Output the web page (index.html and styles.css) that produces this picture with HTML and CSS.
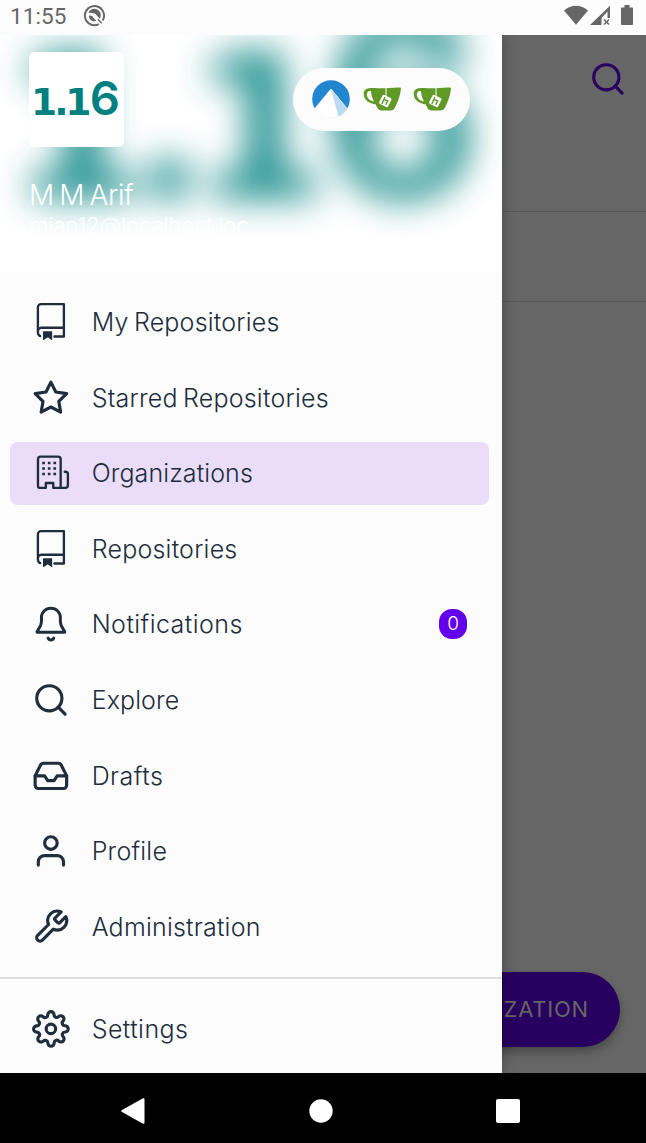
FILE: index.html
```html
<!DOCTYPE html>
<html lang="en">
<head>
<meta charset="utf-8">
<title>Organizations</title>
<link rel="stylesheet" href="styles.css">
</head>
<body>
<svg class="defs" width="0" height="0">
  <symbol id="repo" viewBox="0 0 24 24"><path fill="currentColor" stroke="none" fill-rule="evenodd" d="M3 2.75A2.75 2.75 0 015.75 0h14.5a.75.75 0 01.75.75v20.5a.75.75 0 01-.75.75h-6a.75.75 0 010-1.5h5.25v-4H6A1.5 1.5 0 004.5 18v.75c0 .716.43 1.334 1.05 1.605a.75.75 0 01-.6 1.374A3.25 3.25 0 013 18.75v-16zM19.5 1.5V15H6c-.546 0-1.059.146-1.5.401V2.75c0-.69.56-1.25 1.25-1.25H19.5z"/><path fill="currentColor" stroke="none" d="M7 18.250a.25.25 0 01.25-.25h5.300a.25.25 0 01.25.25v5.010a.25.25 0 01-.397.201l-2.206-1.604a.25.25 0 00-.294 0L7.397 23.460a.25.25 0 01-.397-.2v-5.010z"/></symbol>
  <symbol id="search" viewBox="0 0 24 24"><circle cx="11" cy="11" r="8"/><path d="M21 21l-4.350-4.350"/></symbol>
  <symbol id="cup" viewBox="0 0 38 24">
    <path fill="#609926" d="M6 1.200C9 .6 15 1.300 22 1.200c6-.1 12-.6 15.200-.6.700 0 .8.8.6 2.200C37.200 9 34 17 31.500 21.300c-1 1.600-2 2.200-4 2.200H18.500c-2 0-3.200-1-4-2.500l-2-3.800C7 16.800 1 13.500.7 7.500.5 3.800 2.500 1.500 6 1.200z"/>
    <path fill="#fcfcfc" d="M7.300 4C4.500 4 3.600 6 3.900 8.300c.5 3.500 3.500 5.500 7 6.300C9.300 11.300 8.300 7.800 7.900 4z"/>
    <path d="M23 1v8" stroke="#fcfcfc" stroke-width="1"/>
    <rect x="17.300" y="9" width="10" height="10" rx="1.500" fill="#fcfcfc" transform="rotate(26 22.300 14)"/>
    <path fill="none" stroke="#609926" stroke-width="1.400" d="M22 10l-3.200 7M20.800 12.500l3.800 1.400-1.900 3.800"/>
  </symbol>
</svg>
<div class="screen">
  <header class="status">
    <span class="time">11:55</span>
    <svg class="status-app" viewBox="0 0 24 24"><path fill="none" stroke="#666" stroke-width="2" d="M16.500 21A10 10 0 1 1 20.500 17.300"/><path fill="#666" d="M5.500 9C8 4 14.500 3.600 17.500 8c1.800 3 1 5.500 0 7.500l-4.500-5c-2-1.500-5.500-1.500-7.500-1.500zM6 12.500c2-1 4 0 4.500 1.500l3.500 3.500c-3.500 1.300-7 .2-8-5z"/><path stroke="#666" stroke-width="1.500" d="M15.500 16l4 4"/></svg>
    <svg class="status-icons" viewBox="0 0 70 22">
      <g fill="#666"><path d="M0 5.500C7-1 17-1 24 5.500L12 19.700z"/><path fill-rule="evenodd" d="M26 20L46 .7V13h-2.500V6.500L37.500 13v7z"/><path d="M57 3.500q0-1 1-1h2.500V0h5v2.500H68q1 0 1 1V19q0 1-1 1H58q-1 0-1-1z"/></g>
      <path stroke="#666" stroke-width="1.500" d="M40 14.500l5 5M45 14.500l-5 5"/>
    </svg>
  </header>
  <div class="body">
    <main class="page">
      <div class="toolbar"><svg class="icon"><use href="#search"/></svg></div>
      <div class="strip"></div>
      <div class="fab-row"><div class="fab">NEW ORGANIZATION</div></div>
    </main>
    <aside class="drawer">
      <div class="profile">
        <svg class="cover" viewBox="0 0 94 94"><text class="logo" x="2 25 36 60.500" y="62.500">1.1<tspan class="six">6</tspan></text></svg>
        <div class="profile-top">
          <svg class="avatar" viewBox="0 0 94 94"><text class="logo" x="2 25 36 60.500" y="62.500">1.1<tspan class="six">6</tspan></text></svg>
          <div class="accounts">
            <svg class="peak" viewBox="0 0 38 38"><circle cx="19" cy="19" r="18.800" fill="#2185d0"/><path fill="#fff" stroke="#fcfcfc" stroke-width=".8" d="M19 9L35.300 28.700A19 19 0 0 1 2.700 28.700z"/><path fill="#bcdaf1" d="M19 9L35.300 28.700Q32 34 26.500 36.500z"/></svg>
            <svg class="cup"><use href="#cup"/></svg>
            <svg class="cup"><use href="#cup"/></svg>
          </div>
        </div>
        <div class="name">M M Arif</div>
        <div class="email">mian12@localhost.loc</div>
      </div>
      <nav class="menu">
        <a class="item"><svg class="icon"><use href="#repo"/></svg><span>My Repositories</span></a>
        <a class="item"><svg class="icon" viewBox="0 0 24 24"><path d="M12 2l3.090 6.260L22 9.270l-5 4.870 1.180 6.880L12 17.770l-6.180 3.250L7 14.140 2 9.270l6.910-1.010z"/></svg><span>Starred Repositories</span></a>
        <a class="item active"><svg class="icon thin" viewBox="0 0 24 24"><path d="M5.500 1.700h11a1.700 1.700 0 0 1 1.700 1.700v18.100h-4.700v-3.100h-4.700v3.100H5a1.200 1.200 0 0 1-1.200-1.200V3.400a1.700 1.700 0 0 1 1.700-1.700zM18.200 21.500h3a1.600 1.600 0 0 0 1.600-1.600v-7a1.600 1.600 0 0 0-1.600-1.600h-.4"/><path class="windows" d="M6.500 5.700h10M6.500 9.200h10M6.500 12.700h10"/></svg><span class="snug">Organizations</span></a>
        <a class="item"><svg class="icon"><use href="#repo"/></svg><span>Repositories</span></a>
        <a class="item"><svg class="icon bell" viewBox="0 0 24 24"><path d="M12 2C8.500 2 6 4.700 6 8v2.700c0 3.300-2.800 5.200-2.800 6.600h17.600c0-1.400-2.800-3.300-2.800-6.600V8c0-3.300-2.500-6-6-6zM10.200 21c.6 1.600 3 1.600 3.600 0"/></svg><span class="loose">Notifications</span><b class="badge">0</b></a>
        <a class="item"><svg class="icon"><use href="#search"/></svg><span class="snug">Explore</span></a>
        <a class="item"><svg class="icon" viewBox="0 0 24 24"><path d="M22 12h-6l-2 3h-4l-2-3H2"/><path d="M5.450 5.110L2 12v6a2 2 0 0 0 2 2h16a2 2 0 0 0 2-2v-6l-3.450-6.890A2 2 0 0 0 16.760 4H7.240a2 2 0 0 0-1.790 1.110z"/></svg><span class="loose">Drafts</span></a>
        <a class="item"><svg class="icon" viewBox="0 0 24 24"><path d="M20 21v-2a4 4 0 0 0-4-4H8a4 4 0 0 0-4 4v2"/><circle cx="12" cy="7" r="4"/></svg><span>Profile</span></a>
        <a class="item"><svg class="icon" viewBox="0 0 24 24"><path d="M14.700 6.300a1 1 0 0 0 0 1.400l1.600 1.600a1 1 0 0 0 1.400 0l3.770-3.770a6 6 0 0 1-7.940 7.940l-6.910 6.910a2.120 2.120 0 0 1-3-3l6.910-6.910a6 6 0 0 1 7.940-7.940l-3.760 3.760z"/></svg><span>Administration</span></a>
      </nav>
      <nav class="menu footer">
        <a class="item"><svg class="icon" viewBox="0 0 24 24"><circle cx="12" cy="12" r="3"/><path d="M19.400 15a1.650 1.650 0 0 0 .33 1.820l.06.06a2 2 0 0 1 0 2.830 2 2 0 0 1-2.830 0l-.06-.06a1.650 1.650 0 0 0-1.820-.33 1.650 1.650 0 0 0-1 1.510V21a2 2 0 0 1-2 2 2 2 0 0 1-2-2v-.09A1.650 1.650 0 0 0 9 19.400a1.650 1.650 0 0 0-1.820.33l-.06.06a2 2 0 0 1-2.830 0 2 2 0 0 1 0-2.830l.06-.06a1.650 1.650 0 0 0 .33-1.820 1.650 1.650 0 0 0-1.510-1H3a2 2 0 0 1-2-2 2 2 0 0 1 2-2h.09A1.650 1.650 0 0 0 4.600 9a1.650 1.650 0 0 0-.33-1.820l-.06-.06a2 2 0 0 1 0-2.830 2 2 0 0 1 2.830 0l.06.06a1.650 1.650 0 0 0 1.820.33H9a1.650 1.650 0 0 0 1-1.510V3a2 2 0 0 1 2-2 2 2 0 0 1 2 2v.09a1.650 1.650 0 0 0 1 1.510 1.650 1.650 0 0 0 1.820-.33l.06-.06a2 2 0 0 1 2.830 0 2 2 0 0 1 0 2.830l-.06.06a1.650 1.650 0 0 0-.33 1.820V9a1.650 1.650 0 0 0 1.510 1H21a2 2 0 0 1 2 2 2 2 0 0 1-2 2h-.09a1.650 1.650 0 0 0-1.510 1z"/></svg><span class="loose">Settings</span></a>
      </nav>
    </aside>
  </div>
  <footer class="navbar">
    <svg viewBox="0 0 24 26"><path fill="#fff" d="M22 .3Q23.500-.2 23.500 1.500v23Q23.500 26.200 22 25.700L1 14Q-.5 13 1 12z"/></svg>
    <svg viewBox="0 0 24 26"><circle cx="12" cy="13" r="11.700" fill="#fff"/></svg>
    <svg viewBox="0 0 24 26"><rect x="0" y="1" width="24" height="24" rx="2" fill="#fff"/></svg>
  </footer>
</div>
</body>
</html>
```
FILE: styles.css
```css
* { box-sizing: border-box; }
body { margin: 0; font-family: Inter, "Open Sans", sans-serif; }
.defs { position: absolute; }
.screen { width: 646px; height: 1143px; display: flex; flex-direction: column; overflow: hidden; background: #666; }

.status { height: 34.500px; flex: none; display: flex; align-items: center; padding: 0 12.500px 3px 10px; background: #fcfcfc; color: #666; position: relative; z-index: 3; }
.time { font: 400 22.500px/30px Roboto, sans-serif; letter-spacing: .1px; width: 73px; padding-top: 1px; }
.status-app { width: 23px; height: 23px; }
.status-icons { width: 70px; height: 22px; margin-left: auto; }

.body { flex: 1; display: grid; min-height: 0; overflow: hidden; }
.page, .drawer { grid-area: 1 / 1; }
.page { display: flex; flex-direction: column; }
.toolbar { height: 177px; border-bottom: 1.500px solid #585858; display: flex; justify-content: flex-end; padding: 25px 19px 0 0; color: #28005f; }
.strip { height: 90px; border-bottom: 1.500px solid #585858; }
.fab-row { margin-top: auto; display: flex; justify-content: flex-end; padding: 0 26px 26px 0; }
.fab { height: 75px; border-radius: 38px; padding: 0 31px; background: #28005f; color: #666; font-size: 22px; line-height: 75px; letter-spacing: .8px; white-space: nowrap; box-shadow: 0 5px 10px rgba(0,0,0,.3); }

.drawer { width: 502px; background: #fcfcfc; position: relative; z-index: 2; box-shadow: 0 0 14px rgba(0,0,0,.3); overflow: hidden; display: flex; flex-direction: column; }
.profile { height: 237px; flex: none; background: #fff; position: relative; overflow: hidden; padding: 17.500px 32px 0 29px; color: #fff; }
.cover { position: absolute; left: -2px; top: -171px; width: 502px; height: 502px; filter: blur(18px); opacity: .9; }
.logo { fill: #008080; font: 700 37.500px "DejaVu Sans", sans-serif; }
.six { font: 620 47px Inter, sans-serif; }
.profile-top { position: relative; display: flex; justify-content: space-between; align-items: center; }
.avatar { width: 94.500px; height: 94.500px; background: #fff; border-radius: 5px; }
.accounts { width: 177px; height: 63px; border-radius: 32px; background: #fcfcfc; display: flex; align-items: center; justify-content: center; gap: 12.500px; }
.peak { width: 38px; height: 38px; }
.cup { width: 38px; height: 24px; }
.name { position: relative; margin-top: 30px; font-size: 28px; line-height: 36px; font-weight: 300; letter-spacing: -.4px; word-spacing: -2px; }
.email { position: relative; font-size: 22.500px; line-height: 26px; font-weight: 300; letter-spacing: -.3px; }

.menu { display: flex; flex-direction: column; gap: 12.600px; padding: 19px 13px 19px 10.400px; }
.item { height: 63px; border-radius: 8px; display: flex; align-items: center; padding: 0 22px 0 21.500px; color: #212d3d; font-size: 25px; font-weight: 300; letter-spacing: .22px; word-spacing: -2px; }
.item span { margin-left: 22px; }
.item .snug { letter-spacing: .1px; }
.item .loose { letter-spacing: .45px; }
.active { background: #eaddf9; }
.icon { width: 37.800px; height: 37.800px; flex: none; fill: none; stroke: currentColor; stroke-width: 2; stroke-linecap: round; stroke-linejoin: round; }
.thin { stroke-width: 1.500; }
.bell { stroke-width: 1.900; }
.windows { stroke-dasharray: 1.700 1.850; stroke-linecap: butt; stroke-width: 1.500; }
.badge { margin-left: auto; width: 28px; height: 30px; border-radius: 13px; background: #6200ee; color: #fff; font-size: 19px; line-height: 30px; font-weight: 300; text-align: center; letter-spacing: 0; }
.footer { border-top: 2px solid #dedede; padding-top: 18px; padding-bottom: 0; }

.navbar { height: 70px; flex: none; background: #000; display: flex; align-items: center; gap: 163.500px; padding: 5px 0 0 121px; position: relative; z-index: 3; }
.navbar svg { width: 24px; height: 26px; flex: none; }
```
